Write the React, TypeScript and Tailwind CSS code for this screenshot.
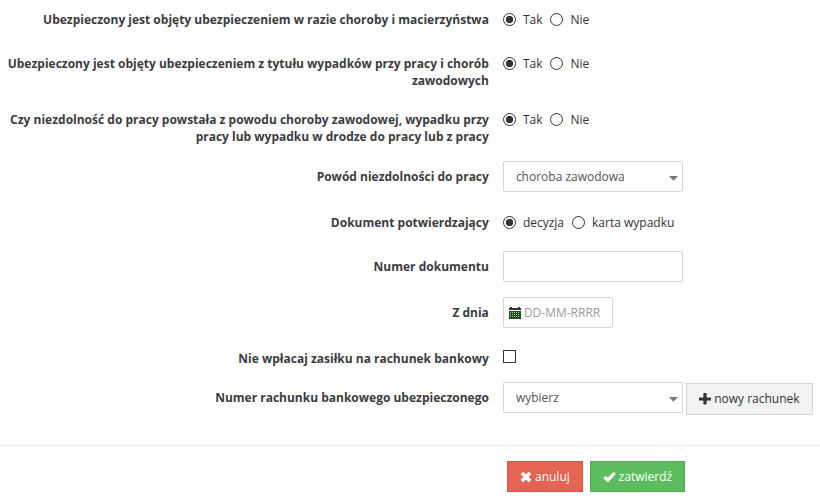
import { useState } from 'react';
import type { ReactNode } from 'react';

const labelClass = 'pt-[7px] text-right text-[12px] leading-[17px] font-bold text-[#3c3c3f]';
const boxClass = 'border border-[#d5d5d5] rounded-[2px] bg-white h-[31px] outline-none focus:border-gray-400';
const radioClass =
  'appearance-none size-[13px] shrink-0 rounded-full border border-[#333] bg-white checked:bg-[radial-gradient(circle,#333_3.4px,transparent_4px)]';

type Option = { value: string; label: string };

const yesNo: Option[] = [
  { value: 'tak', label: 'Tak' },
  { value: 'nie', label: 'Nie' },
];

const documents: Option[] = [
  { value: 'decyzja', label: 'decyzja' },
  { value: 'karta', label: 'karta wypadku' },
];

function Row({ label, htmlFor, children }: { label: string; htmlFor: string; children: ReactNode }) {
  return (
    <div className="grid grid-cols-[11fr_7fr] gap-x-3.5">
      <label htmlFor={htmlFor} className={labelClass}>
        {label}
      </label>
      {children}
    </div>
  );
}

function RadioRow({ name, label, options }: { name: string; label: string; options: Option[] }) {
  const [value, setValue] = useState(options[0].value);

  return (
    <div role="radiogroup" aria-labelledby={`${name}-label`} className="grid grid-cols-[11fr_7fr] gap-x-3.5">
      <div id={`${name}-label`} className={labelClass}>
        {label}
      </div>
      <div className="flex h-[29px] items-center gap-2 pt-0.5">
        {options.map((option) => (
          <label key={option.value} className="flex items-center gap-[7px] text-[12px] leading-[17px] whitespace-nowrap">
            <input
              type="radio"
              name={name}
              value={option.value}
              checked={value === option.value}
              onChange={() => setValue(option.value)}
              className={radioClass}
            />
            {option.label}
          </label>
        ))}
      </div>
    </div>
  );
}

function Select({ id, options }: { id: string; options: string[] }) {
  return (
    <div className="relative w-[180px] shrink-0">
      <select id={id} className={`${boxClass} w-full appearance-none pl-3 pr-6 text-[12px] text-[#555]`}>
        {options.map((option) => (
          <option key={option}>{option}</option>
        ))}
      </select>
      <svg viewBox="0 0 9 5" className="pointer-events-none absolute right-[5px] top-[15px] h-[5px] w-[9px] fill-[#777]" aria-hidden="true">
        <path d="M0 0h9L4.5 4.8z" />
      </svg>
    </div>
  );
}

function CalendarIcon() {
  return (
    <svg viewBox="0 0 12 12" className="size-3 shrink-0" shapeRendering="crispEdges" aria-hidden="true">
      <path fill="#333" d="M0 1h1V0h2v1h6V0h2v1h1v2H0z" />
      <path fill="#1f4a22" d="M0 4h12v8H0z" />
      <path
        fill="#8be08b"
        d="M1 5h1v1H1zM3 5h1v1H3zM5 5h1v1H5zM7 5h1v1H7zM9 5h1v1H9zM1 7h1v1H1zM3 7h1v1H3zM5 7h1v1H5zM7 7h1v1H7zM9 7h1v1H9zM1 9h1v1H1zM3 9h1v1H3zM5 9h1v1H5zM7 9h1v1H7zM9 9h1v1H9z"
      />
    </svg>
  );
}

export default function App() {
  return (
    <form className="bg-white pt-1 font-['Open_Sans',sans-serif] text-[#333]" onSubmit={(e) => e.preventDefault()}>
      <div className="flex flex-col gap-[15px] pr-1.5">
        <RadioRow
          name="choroba"
          label="Ubezpieczony jest objęty ubezpieczeniem w razie choroby i macierzyństwa"
          options={yesNo}
        />
        <RadioRow
          name="wypadki"
          label="Ubezpieczony jest objęty ubezpieczeniem z tytułu wypadków przy pracy i chorób zawodowych"
          options={yesNo}
        />
        <RadioRow
          name="niezdolnosc"
          label="Czy niezdolność do pracy powstała z powodu choroby zawodowej, wypadku przy pracy lub wypadku w drodze do pracy lub z pracy"
          options={yesNo}
        />
      </div>

      <div className="mt-4 flex flex-col gap-[15px] pr-1.5">
        <Row label="Powód niezdolności do pracy" htmlFor="powod">
          <Select id="powod" options={['choroba zawodowa', 'wypadek przy pracy']} />
        </Row>
        <RadioRow name="dokument" label="Dokument potwierdzający" options={documents} />
        <Row label="Numer dokumentu" htmlFor="numer">
          <input id="numer" type="text" className={`${boxClass} w-[180px] px-3 text-[12px]`} />
        </Row>
        <Row label="Z dnia" htmlFor="data">
          <div className={`${boxClass} flex w-[110px] items-center gap-[3px] pl-[5px]`}>
            <CalendarIcon />
            <input
              id="data"
              type="text"
              placeholder="DD-MM-RRRR"
              className="w-full min-w-0 text-[12px] outline-none placeholder:text-[#999]"
            />
          </div>
        </Row>
        <Row label="Nie wpłacaj zasiłku na rachunek bankowy" htmlFor="bez-wplaty">
          <div className="flex pt-[7px]">
            <input
              id="bez-wplaty"
              type="checkbox"
              className="size-[13px] appearance-none border border-[#333] bg-white checked:bg-[#333]"
            />
          </div>
        </Row>
        <Row label="Numer rachunku bankowego ubezpieczonego" htmlFor="rachunek">
          <div className="flex gap-[3px]">
            <Select id="rachunek" options={['wybierz']} />
            <button
              type="button"
              className="mt-px flex h-8 w-[127px] shrink-0 items-center justify-center gap-[3px] border border-[#d5d5d5] bg-[#f1f2f4] text-[12px]"
            >
              <svg viewBox="0 0 12 12" className="size-3 fill-[#333]" aria-hidden="true">
                <path d="M4.8 0h2.4q.4 0 .4.4v4h4q.4 0 .4.4v2.4q0 .4-.4.4h-4v3.6q0 .4-.4.4H4.800q-.4 0-.4-.4V7.600h-4q-.4 0-.4-.4V4.800q0-.4.4-.4h4v-4q0-.4.4-.4z" />
              </svg>
              nowy rachunek
            </button>
          </div>
        </Row>
      </div>

      <div className="mt-[30px] border-t border-[#eee] pt-[15px]">
        <div className="grid grid-cols-[11fr_7fr] gap-x-3.5 pr-1.5">
          <div className="col-start-2 flex gap-[7px] pl-1 text-[12px] text-white">
            <button
              type="button"
              className="flex h-[31px] w-[76px] items-center justify-center gap-[3px] border border-[#d2564a] bg-[#e56353]"
            >
              <svg viewBox="0 0 12 12" className="size-3 fill-white" aria-hidden="true">
                <path d="M3.2.6 6 3.4 8.8.6l2.6 2.6L8.6 6l2.8 2.8-2.6 2.6L6 8.6l-2.8 2.8L.6 8.8 3.4 6 .6 3.2z" />
              </svg>
              anuluj
            </button>
            <button
              type="submit"
              className="flex h-[31px] w-[95px] items-center justify-center gap-[3px] border border-[#4cae4c] bg-[#5cbd60]"
            >
              <svg viewBox="0 0 13 12" className="h-3 w-[13px] fill-white" aria-hidden="true">
                <path d="M.2 7.200 2.600 4.700l2.300 2.100L10.600.7l2.300 2.200-8 8.600z" />
              </svg>
              zatwierdź
            </button>
          </div>
        </div>
      </div>
    </form>
  );
}
